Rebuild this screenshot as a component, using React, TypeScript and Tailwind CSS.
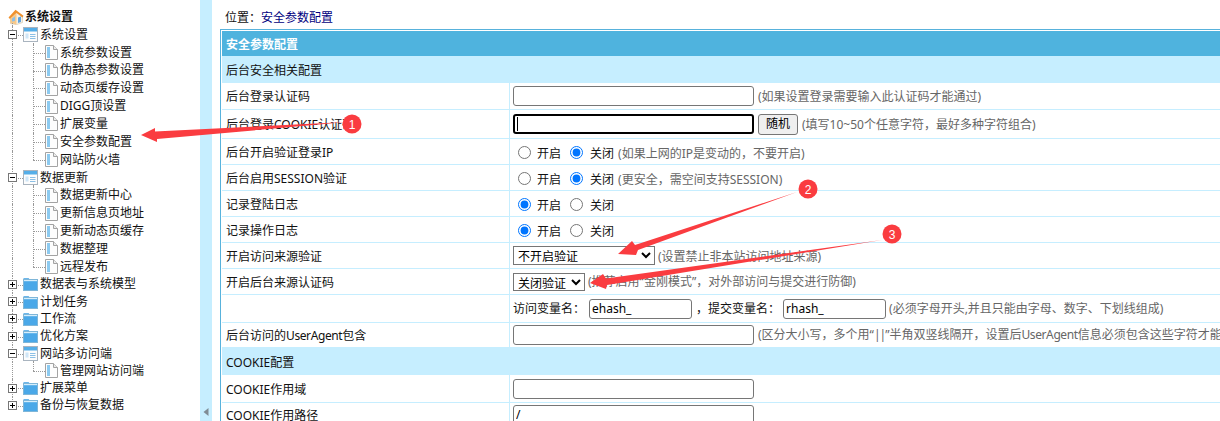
import type { ReactNode } from 'react'

type TreeRow = { kind: 'root' | 'open' | 'closed' | 'leaf'; text: string; last?: boolean; low?: boolean }

const tree: TreeRow[] = [
  { kind: 'root', text: '系统设置' },
  { kind: 'open', text: '系统设置' },
  { kind: 'leaf', text: '系统参数设置' },
  { kind: 'leaf', text: '伪静态参数设置' },
  { kind: 'leaf', text: '动态页缓存设置' },
  { kind: 'leaf', text: 'DIGG顶设置' },
  { kind: 'leaf', text: '扩展变量' },
  { kind: 'leaf', text: '安全参数配置' },
  { kind: 'leaf', text: '网站防火墙', last: true },
  { kind: 'open', text: '数据更新' },
  { kind: 'leaf', text: '数据更新中心' },
  { kind: 'leaf', text: '更新信息页地址' },
  { kind: 'leaf', text: '更新动态页缓存' },
  { kind: 'leaf', text: '数据整理' },
  { kind: 'leaf', text: '远程发布', last: true },
  { kind: 'closed', text: '数据表与系统模型', low: true },
  { kind: 'closed', text: '计划任务', low: true },
  { kind: 'closed', text: '工作流', low: true },
  { kind: 'closed', text: '优化方案', low: true },
  { kind: 'open', text: '网站多访问端', low: true },
  { kind: 'leaf', text: '管理网站访问端', last: true, low: true },
  { kind: 'closed', text: '扩展菜单', low: true },
  { kind: 'closed', text: '备份与恢复数据', low: true, last: true },
]

function HouseIcon() {
  return (
    <svg width="16" height="16" viewBox="0 0 16 16" className="block shrink-0">
      <path d="M2.5 8v6.5l6 1.2 6-2.2V7L9 3z" fill="#f6f0e4" stroke="#c9b99a" strokeWidth="0.5" />
      <path d="M0.5 8.5 7.5 0.8l8 6-1 1.6L8.5 4 2 10z" fill="#f0922e" />
      <path d="M2 10 8.5 4v11.5l-6-1.2z" fill="#f7c98a" />
      <path d="M10 8.5l3-1v5.5l-3 1z" fill="#5fa3de" />
      <path d="M4 9.5l3-2v4.5l-3 0.5z" fill="#8dbfe8" />
    </svg>
  )
}

function WindowIcon() {
  return (
    <svg width="15" height="15" viewBox="0 0 15 15" className="block shrink-0">
      <rect x="0.5" y="0.5" width="14" height="14" fill="#fdfdfd" stroke="#a9b4bf" />
      <rect x="1" y="1" width="13" height="3.5" fill="#55aee8" />
      <rect x="2.5" y="6.5" width="3" height="5" fill="#cfe6f7" />
      <path d="M7 7.5h5.5M7 9.5h5.5M7 11.5h5.5" stroke="#8cc0e6" />
    </svg>
  )
}

function FolderIcon() {
  return (
    <svg width="15" height="14" viewBox="0 0 15 14" className="block shrink-0">
      <path d="M0.5 2.5V1.2h5.2l1 1.3z" fill="#3d9fe3" />
      <rect x="0.5" y="2.5" width="14" height="11" fill="#5cb6ee" stroke="#7fb6d8" />
      <rect x="1" y="4" width="13" height="9" fill="#4aa8e8" />
      <rect x="1" y="3" width="13" height="1.2" fill="#d6eefb" />
    </svg>
  )
}

function PageIcon() {
  return (
    <svg width="13" height="15" viewBox="0 0 13 15" className="block shrink-0">
      <path d="M0.5 0.5h8l4 4v10H0.5z" fill="#fdfdfd" stroke="#a3a3a3" />
      <path d="M8.5 0.5v4h4" fill="#ececec" stroke="#a3a3a3" />
      <rect x="2" y="2" width="3" height="11" fill="#8ccaf0" />
    </svg>
  )
}

function ExpandBox({ open }: { open: boolean }) {
  return (
    <div className="relative z-10 ml-[8px] w-[9px] h-[9px] border border-[#777777] bg-white shrink-0">
      <span className="absolute left-[1px] top-[3px] w-[5px] h-px bg-black" />
      {!open && <span className="absolute left-[3px] top-[1px] w-px h-[5px] bg-black" />}
    </div>
  )
}

function Tree() {
  return (
    <div className="w-[200px] shrink-0 pt-[8px] bg-white">
      {tree.map((row, i) => (
        <div key={i} className={`relative flex items-center text-[12px] text-[#111111] whitespace-nowrap ${row.low ? 'h-[17.3px]' : 'h-[17.85px]'}`}>
          {row.kind === 'root' && (
            <>
              <span className="absolute left-[12px] top-[15px] bottom-0 border-l border-dotted border-[#999999]" />
              <div className="ml-[8px]"><HouseIcon /></div>
              <span className="ml-[1px] font-bold">{row.text}</span>
            </>
          )}
          {(row.kind === 'open' || row.kind === 'closed') && (
            <>
              <span className={`absolute left-[12px] top-0 border-l border-dotted border-[#999999] ${row.last ? 'h-[9px]' : 'bottom-0'}`} />
              <span className="absolute left-[16px] top-[9px] w-[7px] border-t border-dotted border-[#999999]" />
              {row.kind === 'open' && <span className="absolute left-[33px] top-[15px] bottom-0 border-l border-dotted border-[#999999]" />}
              <ExpandBox open={row.kind === 'open'} />
              <div className="ml-[6px] relative z-10">{row.kind === 'open' ? <WindowIcon /> : <FolderIcon />}</div>
              <span className="ml-[2px]">{row.text}</span>
            </>
          )}
          {row.kind === 'leaf' && (
            <>
              <span className="absolute left-[12px] top-0 bottom-0 border-l border-dotted border-[#999999]" />
              <span className={`absolute left-[33px] top-0 border-l border-dotted border-[#999999] ${row.last ? 'h-[9px]' : 'bottom-0'}`} />
              <span className="absolute left-[33px] top-[9px] w-[12px] border-t border-dotted border-[#999999]" />
              <div className="ml-[45px]"><PageIcon /></div>
              <span className="ml-[2px]">{row.text}</span>
            </>
          )}
        </div>
      ))}
    </div>
  )
}

function Row({ label, h, children }: { label: ReactNode; h: string; children?: ReactNode }) {
  return (
    <div className={`flex ${h} border-b border-[#c6eeff]`}>
      <div className="w-[288px] shrink-0 pl-[4px] pt-[2px] flex items-center border-r border-[#c6eeff]"><span>{label}</span></div>
      <div className="flex-1 pl-[3px] flex items-center whitespace-nowrap">{children}</div>
    </div>
  )
}

function Section({ text, h }: { text: string; h: string }) {
  return <div className={`${h} bg-[#c6eeff] pl-[4px] pt-[2px] flex items-center`}>{text}</div>
}

function Hint({ children, className = '' }: { children: ReactNode; className?: string }) {
  return <span className={`text-[#666666] ${className}`}>{children}</span>
}

function TextBox({ value = '', w = 'w-[241px]' }: { value?: string; w?: string }) {
  return (
    <input
      readOnly
      value={value}
      className={`${w} h-[20px] shrink-0 border border-[#767676] rounded-[3px] bg-white px-[2px] text-[12px] text-black`}
    />
  )
}

function Radios({ on, hint }: { on: boolean; hint?: string }) {
  return (
    <span className="flex items-center pl-[5px] pt-[2px]">
      <input type="radio" readOnly checked={on} className="w-[13px] h-[13px]" />
      <span className="ml-[6px] pt-[2px]">开启</span>
      <input type="radio" readOnly checked={!on} className="w-[13px] h-[13px] ml-[9px]" />
      <span className="ml-[7px] pt-[2px]">关闭</span>
      {hint && <Hint className="ml-[4px] pt-[2px]">{hint}</Hint>}
    </span>
  )
}

function Arrows() {
  return (
    <svg width="1220" height="421" viewBox="0 0 1220 421" className="absolute left-0 top-0 pointer-events-none">
      <g fill="#fa3c40">
        <path d="M141 135 155 128 155 131.5 347 122 157 139 157 142z" />
        <circle cx="352" cy="124" r="9.5" />
        <path d="M618 254 632 241 635 245 797 192 638 250 636 255z" />
        <circle cx="808" cy="189" r="9.5" />
        <path d="M590 283 603 274 606 278.5 882 240 607 285 606 289z" />
        <circle cx="892" cy="234" r="9.5" />
      </g>
      <g fill="#ffffff" fontSize="12" textAnchor="middle" fontFamily="'Liberation Sans', sans-serif">
        <text x="352" y="128.5">1</text>
        <text x="808" y="193.5">2</text>
        <text x="892" y="238.5">3</text>
      </g>
    </svg>
  )
}

export default function App() {
  return (
    <div className="relative flex w-[1220px] h-[421px] overflow-hidden bg-white text-[12px] text-[#111111] font-['Noto_Sans','Noto_Sans_CJK_SC',sans-serif]">
      <Tree />

      {/* splitter */}
      <div className="w-[12px] shrink-0 bg-[#c6eeff] flex items-end justify-center pb-[5px]">
        <svg width="6" height="8" viewBox="0 0 6 8"><path d="M5.5 0v8L0.5 4z" fill="#7f8c95" /></svg>
      </div>

      <div className="w-[1008px] shrink-0">
        <div className="h-[29px] pl-[13px] pt-[7px] flex items-center">
          位置：<span className="text-[#000080]">安全参数配置</span>
        </div>

        <div className="ml-[8px] w-[1100px] border border-[#58b2dc] p-px">
          <div className="h-[25px] bg-[#4fb3de] pl-[4px] pt-[2px] flex items-center font-bold text-white">安全参数配置</div>
          <Section text="后台安全相关配置" h="h-[27px]" />
          <Row label="后台登录认证码" h="h-[27px]">
            <TextBox />
            <Hint className="ml-[4px] pt-[2px]">(如果设置登录需要输入此认证码才能通过)</Hint>
          </Row>
          <Row label="后台登录COOKIE认证码" h="h-[29px]">
            <span className="relative shrink-0">
              <input readOnly className="block w-[241px] h-[20px] border-2 border-black rounded-[3px] bg-white" />
              <span className="absolute left-[4px] top-[3px] w-px h-[14px] bg-black" />
            </span>
            <button className="ml-[4px] w-[40px] h-[21px] border border-[#767676] rounded-[3px] bg-[#efefef] text-[12px] text-black">随机</button>
            <Hint className="ml-[4px] pt-[2px]">(填写10~50个任意字符，最好多种字符组合)</Hint>
          </Row>
          <Row label="后台开启验证登录IP" h="h-[26px]">
            <Radios on={false} hint="(如果上网的IP是变动的，不要开启)" />
          </Row>
          <Row label="后台启用SESSION验证" h="h-[26px]">
            <Radios on={false} hint="(更安全，需空间支持SESSION)" />
          </Row>
          <Row label="记录登陆日志" h="h-[26px]">
            <Radios on />
          </Row>
          <Row label="记录操作日志" h="h-[26px]">
            <Radios on />
          </Row>
          <Row label="开启访问来源验证" h="h-[26px]">
            <select className="w-[142px] h-[19px] shrink-0 border border-[#767676] bg-white text-[12px] text-black">
              <option>不开启验证</option>
            </select>
            <Hint className="ml-[3px] pt-[2px]">(设置禁止非本站访问地址来源)</Hint>
          </Row>
          <Row label="开启后台来源认证码" h="h-[26px]">
            <select className="w-[72px] h-[18px] shrink-0 border border-[#767676] bg-white text-[12px] text-black">
              <option>关闭验证</option>
            </select>
            <Hint className="ml-[3px]">(推荐启用“金刚模式”，对外部访问与提交进行防御)</Hint>
          </Row>
          <Row label="" h="h-[28px]">
            <span>访问变量名：</span>
            <span className="ml-[4px] flex"><TextBox value="ehash_" w="w-[103px]" /></span>
            <span className="ml-[4px]">，提交变量名：</span>
            <span className="ml-[3px] flex"><TextBox value="rhash_" w="w-[103px]" /></span>
            <Hint className="ml-[3px]">(必须字母开头,并且只能由字母、数字、下划线组成)</Hint>
          </Row>
          <Row label={<>后台访问的<span className="tracking-[-0.4px]">UserAgent</span>包含</>} h="h-[25px]">
            <TextBox />
            <Hint className="ml-[4px]">
              (区分大小写，多个用“<span className="tracking-[-1px]">||</span>”半角双竖线隔开，设置后<span className="tracking-[-0.4px]">UserAgent</span>信息必须包含这些字符才能访问)
            </Hint>
          </Row>
          <Section text="COOKIE配置" h="h-[27px]" />
          <Row label="COOKIE作用域" h="h-[28px]">
            <TextBox />
          </Row>
          <Row label="COOKIE作用路径" h="h-[24px]">
            <TextBox value="/" />
          </Row>
        </div>
      </div>

      <Arrows />
    </div>
  )
}
